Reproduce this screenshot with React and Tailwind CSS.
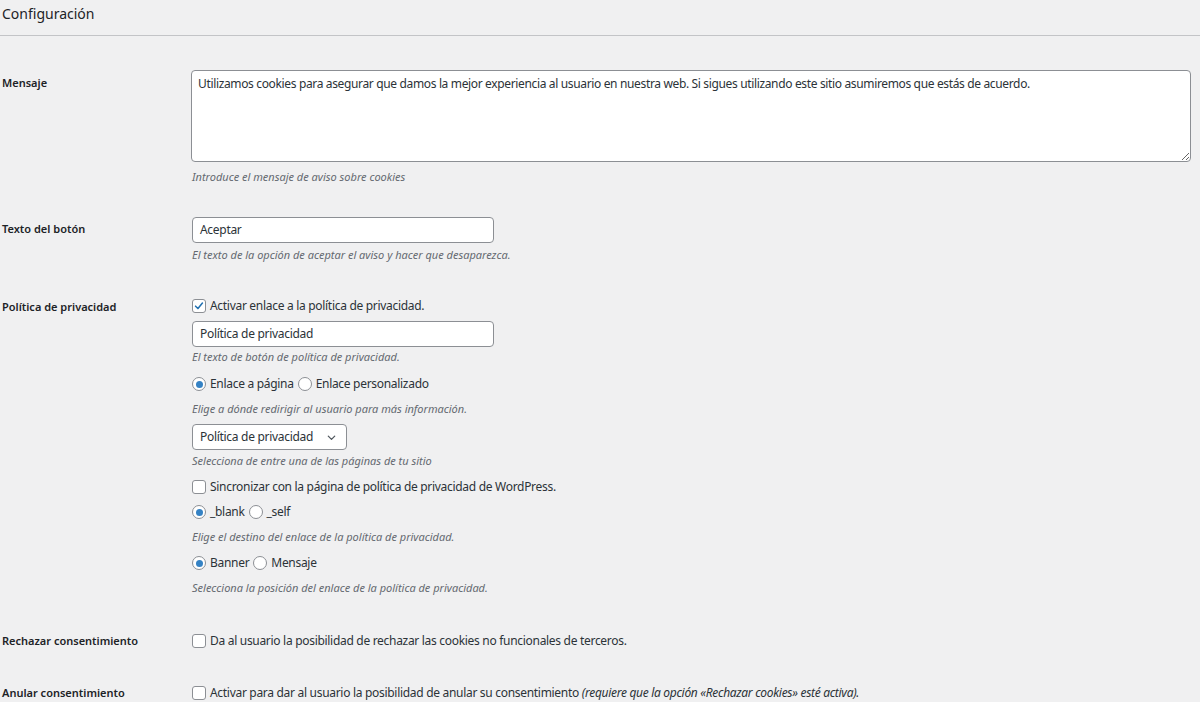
import { useState } from 'react';

const font = { fontFamily: '"Noto Sans", "Open Sans", sans-serif' };

function Checkbox({ checked }) {
  return (
    <span className="inline-flex items-center justify-center w-[14px] h-[14px] rounded-[3px] border border-[#8c8f94] bg-white shrink-0">
      {checked && (
        <svg viewBox="0 0 14 14" className="w-[12px] h-[12px]">
          <path d="M3 7.2 L5.8 10 L11 3.6" fill="none" stroke="#2271b1" strokeWidth="1.8" strokeLinecap="round" strokeLinejoin="round" />
        </svg>
      )}
    </span>
  );
}

function Radio({ checked }) {
  return (
    <span className="inline-flex items-center justify-center w-[14px] h-[14px] rounded-full border border-[#8c8f94] bg-white shrink-0">
      {checked && <span className="w-[7px] h-[7px] rounded-full bg-[#3582c4]" />}
    </span>
  );
}

function Desc({ children, className = '' }) {
  return <p className={`text-[11px] leading-[18px] italic text-[#646970] ${className}`}>{children}</p>;
}

function Label({ children, className = '' }) {
  return (
    <div className={`w-[192px] shrink-0 pl-[2px] text-[11px] leading-[18px] font-semibold text-[#1d2327] ${className}`}>
      {children}
    </div>
  );
}

export default function App() {
  const [msg, setMsg] = useState('Utilizamos cookies para asegurar que damos la mejor experiencia al usuario en nuestra web. Si sigues utilizando este sitio asumiremos que estás de acuerdo.');

  return (
    <div className="w-[1200px] h-[702px] overflow-hidden bg-[#f0f0f1] text-[#2c3338]" style={font}>
      <h2 className="pt-[4px] pl-[2px] text-[14px] leading-[20px] font-normal text-[#1d2327]">Configuración</h2>
      <div className="mt-[11px] h-px bg-[#c3c4c7]" />

      {/* Mensaje */}
      <div className="flex">
        <Label className="pt-[38px]">Mensaje</Label>
        <div className="flex-1 pt-[34px] pr-[10px]">
          <textarea
            value={msg}
            onChange={e => setMsg(e.target.value)}
            className="block w-[1000px] -ml-px h-[92px] rounded-[4px] border border-[#8c8f94] bg-white px-[6px] py-[4px] text-[12px] leading-[18px] tracking-[-0.35px] text-[#2c3338] outline-none"
            style={font}
          />
          <Desc className="mt-[6px]">Introduce el mensaje de aviso sobre cookies</Desc>
        </div>
      </div>

      {/* Texto del botón */}
      <div className="flex">
        <Label className="pt-[34px]">Texto del botón</Label>
        <div className="flex-1 pt-[31px]">
          <div className="w-[302px] h-[26px] rounded-[4px] border border-[#8c8f94] bg-white px-[7px] text-[12px] leading-[24px] tracking-[-0.3px] text-[#2c3338]">Aceptar</div>
          <Desc className="mt-[3px]">El texto de la opción de aceptar el aviso y hacer que desaparezca.</Desc>
        </div>
      </div>

      {/* Política de privacidad */}
      <div className="flex">
        <Label className="pt-[34px]">Política de privacidad</Label>
        <div className="flex-1 pt-[33px] text-[12px] leading-[18px] tracking-[-0.3px]">
          <div className="flex items-center gap-[4px]">
            <Checkbox checked />
            <span>Activar enlace a la política de privacidad.</span>
          </div>
          <div className="mt-[6px] w-[302px] h-[26px] rounded-[4px] border border-[#8c8f94] bg-white px-[7px] leading-[24px]">Política de privacidad</div>
          <Desc className="mt-px tracking-normal">El texto de botón de política de privacidad.</Desc>
          <div className="mt-[9px] flex items-center gap-[4px]">
            <Radio checked />
            <span>Enlace a página</span>
            <Radio />
            <span>Enlace personalizado</span>
          </div>
          <Desc className="mt-[7px] tracking-normal">Elige a dónde redirigir al usuario para más información.</Desc>
          <div className="mt-[6px] w-[155px] h-[26px] rounded-[4px] border border-[#8c8f94] bg-white pl-[7px] pr-[9px] flex items-center justify-between">
            <span>Política de privacidad</span>
            <svg viewBox="0 0 12 12" className="w-[11px] h-[11px]">
              <path d="M2.5 4.5 L6 8 L9.5 4.5" fill="none" stroke="#50575e" strokeWidth="1.4" strokeLinecap="round" strokeLinejoin="round" />
            </svg>
          </div>
          <Desc className="mt-[2px] tracking-normal">Selecciona de entre una de las páginas de tu sitio</Desc>
          <div className="mt-[8px] flex items-center gap-[4px]">
            <Checkbox />
            <span>Sincronizar con la página de política de privacidad de WordPress.</span>
          </div>
          <div className="mt-[7px] flex items-center gap-[4px]">
            <Radio checked />
            <span>_blank</span>
            <Radio />
            <span>_self</span>
          </div>
          <Desc className="mt-[7px] tracking-normal">Elige el destino del enlace de la política de privacidad.</Desc>
          <div className="mt-[8px] flex items-center gap-[4px]">
            <Radio checked />
            <span>Banner</span>
            <Radio />
            <span>Mensaje</span>
          </div>
          <Desc className="mt-[7px] tracking-normal">Selecciona la posición del enlace de la política de privacidad.</Desc>
        </div>
      </div>

      {/* Rechazar consentimiento */}
      <div className="flex">
        <Label className="pt-[35px]">Rechazar consentimiento</Label>
        <div className="flex-1 pt-[35px] text-[12px] leading-[18px] tracking-[-0.3px] flex items-center gap-[4px] self-start">
          <Checkbox />
          <span>Da al usuario la posibilidad de rechazar las cookies no funcionales de terceros.</span>
        </div>
      </div>

      {/* Anular consentimiento */}
      <div className="flex">
        <Label className="pt-[34px]">Anular consentimiento</Label>
        <div className="flex-1 pt-[34px] text-[12px] leading-[18px] tracking-[-0.3px] flex items-center gap-[4px] self-start">
          <Checkbox />
          <span>
            Activar para dar al usuario la posibilidad de anular su consentimiento{' '}
            <em>(requiere que la opción «Rechazar cookies» esté activa).</em>
          </span>
        </div>
      </div>
    </div>
  );
}
